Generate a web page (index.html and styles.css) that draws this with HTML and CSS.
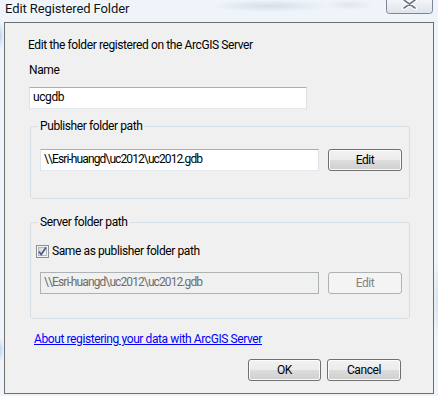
FILE: index.html
```html
<!DOCTYPE html>
<html lang="en">
<head>
    <meta charset="UTF-8">
    <title>Edit Registered Folder</title>
    <link rel="stylesheet" href="styles.css">
</head>
<body>

    <div class="titlebar">
        <span class="title">Edit Registered Folder</span>
        <span class="close">
            <svg width="47" height="14" viewBox="0 0 47 14">
                <defs>
                    <linearGradient id="cg" x1="0" y1="0" x2="0" y2="1">
                        <stop offset="0" stop-color="#f4f6f9"/>
                        <stop offset="1" stop-color="#dde3ea"/>
                    </linearGradient>
                </defs>
                <path d="M0.5 -1 V10.5 Q0.5 13.5 3.5 13.5 H43.5 Q46.5 13.5 46.5 10.5 V-1" fill="url(#cg)" stroke="#7d8794"/>
                <path d="M18 0 L29 8 M29 0 L18 8" stroke="#ffffff" stroke-width="4" stroke-linecap="round"/>
                <path d="M18 0 L29 8 M29 0 L18 8" stroke="#6b7480" stroke-width="1.6" stroke-linecap="round"/>
            </svg>
        </span>
    </div>

    <div class="client">
        <p class="intro">Edit the folder registered on the ArcGIS Server</p>

        <div class="label">Name</div>
        <div class="textbox name-box">ucgdb</div>

        <fieldset class="group pub">
            <legend>Publisher folder path</legend>
            <div class="path-row">
                <div class="textbox path">\\Esri-huangd\uc2012\uc2012.gdb</div>
                <span class="btn">Edit</span>
            </div>
        </fieldset>

        <fieldset class="group srv">
            <legend>Server folder path</legend>
            <div class="check-row">
                <svg class="checkbox" width="13" height="13" viewBox="0 0 13 13">
                    <defs>
                        <linearGradient id="kg" x1="0" y1="0" x2="1" y2="1">
                            <stop offset="0" stop-color="#d6d6d6"/>
                            <stop offset="1" stop-color="#fbfbfb"/>
                        </linearGradient>
                    </defs>
                    <rect x="0.5" y="0.5" width="12" height="12" fill="#f4f4f4" stroke="#8e8f8f"/>
                    <rect x="2.5" y="2.5" width="8" height="8" fill="url(#kg)" stroke="#b8b8b8"/>
                    <path d="M3 6.5 L5.2 9.5 L10 2.5" fill="none" stroke="#4a5f97" stroke-width="1.8"/>
                </svg>
                <span>Same as publisher folder path</span>
            </div>
            <div class="path-row disabled">
                <div class="textbox path">\\Esri-huangd\uc2012\uc2012.gdb</div>
                <span class="btn">Edit</span>
            </div>
        </fieldset>

        <a class="help" href="#">About registering your data with ArcGIS Server</a>

        <div class="actions">
            <span class="btn">OK</span>
            <span class="btn">Cancel</span>
        </div>
    </div>

</body>
</html>
```

FILE: styles.css
```css
html, body {
    margin: 0;
    height: 396px;
    overflow: hidden;
}
body {
    font-family: Roboto, "Liberation Sans", sans-serif;
    font-size: 12px;
    letter-spacing: -0.4px;
    color: #000;
    background-color: #eef4f9;
    background-image:
        radial-gradient(ellipse 4px 14px at 0 36px, #b9d6ef, transparent),
        radial-gradient(ellipse 4px 12px at 0 350px, #b9d6ef, transparent),
        radial-gradient(ellipse 5px 40px at 438px 300px, #cfe3f4, transparent),
        radial-gradient(ellipse 60px 6px at 270px 6px, #d6dee8, transparent),
        radial-gradient(ellipse 25px 5px at 350px 5px, #e0e6ed, transparent);
}
.titlebar {
    height: 22px;
    display: flex;
    justify-content: space-between;
    padding: 0 5px 0 5px;
}
.title {
    font-size: 13px;
    letter-spacing: -0.1px;
    line-height: 17px;
    color: #0d1420;
    text-shadow: 0 0 6px #fff, 0 0 3px #fff;
}
.close {
    height: 14px;
    line-height: 0;
}
.client {
    margin: 0 4px;
    height: 372px;
    box-sizing: border-box;
    border: 1px solid #6e6e6e;
    background: #f0f0f0;
    padding: 15px 0 0 24px;
}
.intro {
    margin: 0 0 0 -1px;
    line-height: 15px;
}
.label {
    margin-top: 10px;
    line-height: 15px;
}
.textbox {
    box-sizing: border-box;
    height: 22px;
    line-height: 19px;
    padding: 0 3px;
    background: #fff;
    border: 1px solid;
    border-color: #abadb3 #dbdfe6 #e3e9ef #e2e3ea;
    white-space: nowrap;
    overflow: hidden;
}
.name-box {
    margin-top: 9px;
    width: 278px;
}
.group {
    margin: 0 0 0 1px;
    width: 379px;
    box-sizing: border-box;
    border: 1px solid #d5dfe5;
    border-radius: 3px;
    padding: 0 7px 0 9px;
}
.group legend {
    margin-left: -2px;
    padding: 0 2px;
    line-height: 15px;
}
.pub {
    margin-top: 10px;
    padding-bottom: 27px;
}
.srv {
    margin-top: 16px;
    padding-bottom: 24px;
}
.path-row {
    display: flex;
    gap: 9px;
    margin-top: 15px;
}
.path {
    width: 279px;
    letter-spacing: -0.9px;
}
.btn {
    box-sizing: border-box;
    width: 74px;
    height: 22px;
    display: flex;
    align-items: center;
    justify-content: center;
    border: 1px solid #707070;
    border-radius: 3px;
    background: linear-gradient(#f2f2f2 0%, #ebebeb 50%, #dddddd 50%, #cfcfcf 100%);
    box-shadow: inset 0 0 0 1px #fbfbfb;
}
.check-row {
    display: flex;
    align-items: center;
    gap: 3px;
    margin: 14px 0 0 -4px;
    line-height: 15px;
}
.disabled {
    margin-top: 13px;
}
.disabled .textbox {
    background: #f0f0f0;
    border-color: #adb2b5;
    color: #6d6d6d;
}
.disabled .btn {
    border-color: #adb2b5;
    background: #f4f4f4;
    box-shadow: none;
    color: #838383;
}
.help {
    display: inline-block;
    margin: 13px 0 0 5px;
    line-height: 15px;
    color: #0000ff;
}
.actions {
    display: flex;
    justify-content: flex-end;
    gap: 6px;
    margin: 12px 32px 0 0;
}
.actions .btn:first-child {
    width: 73px;
}
```
